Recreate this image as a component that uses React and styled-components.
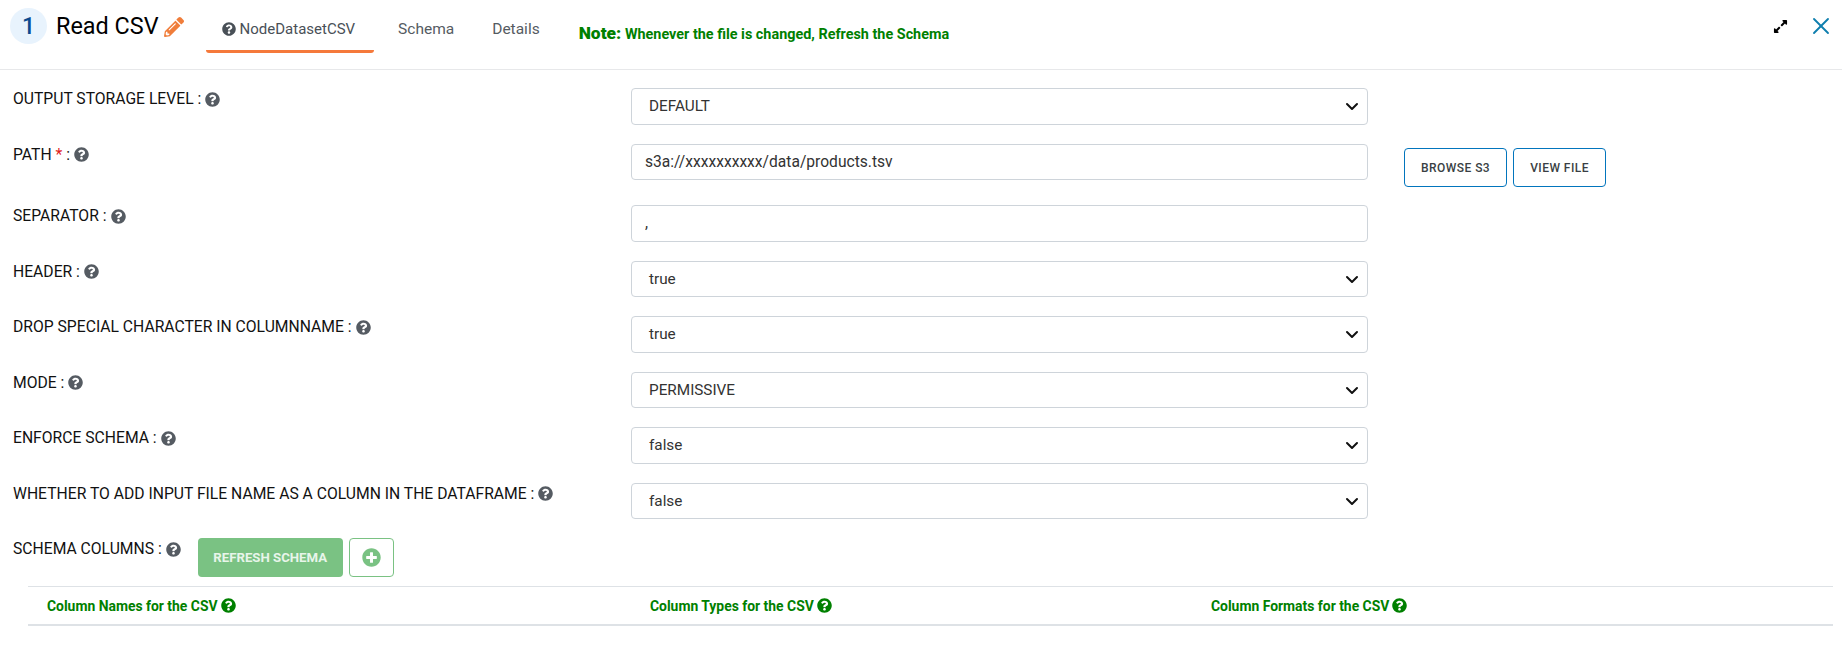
import React from "react";
import styled, { createGlobalStyle } from "styled-components";
import { FaQuestionCircle, FaPencilAlt, FaPlusCircle, FaExpandAlt } from "react-icons/fa";
import { X } from "lucide-react";

const fields = [
  { label: "OUTPUT STORAGE LEVEL :", value: "DEFAULT", type: "select" },
  { label: "PATH", required: true, value: "s3a://xxxxxxxxxx/data/products.tsv", type: "input", actions: true },
  { label: "SEPARATOR :", value: ",", type: "input" },
  { label: "HEADER :", value: "true", type: "select" },
  { label: "DROP SPECIAL CHARACTER IN COLUMNNAME :", value: "true", type: "select" },
  { label: "MODE :", value: "PERMISSIVE", type: "select" },
  { label: "ENFORCE SCHEMA :", value: "false", type: "select" },
  { label: "WHETHER TO ADD INPUT FILE NAME AS A COLUMN IN THE DATAFRAME :", value: "false", type: "select" },
];

const columns = ["Column Names for the CSV", "Column Types for the CSV", "Column Formats for the CSV"];

export default function App() {
  return (
    <Page>
      <GlobalStyle />
      <Header>
        <StepBadge>1</StepBadge>
        <Title>Read CSV</Title>
        <PencilIcon />
        <Tabs>
          <Tab $active>
            <FaQuestionCircle size={14} />
            NodeDatasetCSV
          </Tab>
          <Tab>Schema</Tab>
          <Tab>Details</Tab>
        </Tabs>
        <Note>
          <b>Note:</b> Whenever the file is changed, Refresh the Schema
        </Note>
        <HeaderActions>
          <FaExpandAlt size={15} color="#000" />
          <CloseIcon size={28} strokeWidth={1.6} />
        </HeaderActions>
      </Header>
      <Form>
        {fields.map((f) => (
          <Row key={f.label} $tall={f.actions}>
            <Label>
              {f.label}
              {f.required && (
                <>
                  {" "}
                  <Star>*</Star> :
                </>
              )}
              <HelpIcon />
            </Label>
            <Control>
              {f.type === "select" ? (
                <Select>
                  {f.value}
                  <svg width="16" height="16" viewBox="0 0 16 16" fill="none" stroke="#111" strokeWidth="2" strokeLinecap="round" strokeLinejoin="round">
                    <path d="M3 6l5 5 5-5" />
                  </svg>
                </Select>
              ) : (
                <TextInput readOnly value={f.value} />
              )}
            </Control>
            {f.actions && (
              <Actions>
                <OutlineButton>BROWSE S3</OutlineButton>
                <OutlineButton>VIEW FILE</OutlineButton>
              </Actions>
            )}
          </Row>
        ))}
        <SchemaRow>
          <Label>
            SCHEMA COLUMNS :
            <HelpIcon />
          </Label>
          <RefreshButton>REFRESH SCHEMA</RefreshButton>
          <AddButton>
            <FaPlusCircle size={19} />
          </AddButton>
        </SchemaRow>
        <ColumnsTable>
          {columns.map((c) => (
            <ColumnHead key={c}>
              {c}
              <FaQuestionCircle size={15} />
            </ColumnHead>
          ))}
        </ColumnsTable>
      </Form>
    </Page>
  );
}

const GlobalStyle = createGlobalStyle`
  body {
    margin: 0;
    background: #fff;
    font-family: Roboto, "Liberation Sans", sans-serif;
    color: #212529;
  }
`;

const Page = styled.div`
  width: 1842px;
  height: 669px;
  overflow: hidden;
`;

const Header = styled.header`
  height: 70px;
  box-sizing: border-box;
  border-bottom: 1px solid #e7e8ea;
  display: flex;
  align-items: flex-start;
  padding-left: 10px;
`;

const StepBadge = styled.div`
  width: 37px;
  height: 36px;
  margin-top: 8px;
  border-radius: 50%;
  background: #e8f3fd;
  color: #0b4a8f;
  font-size: 23px;
  font-weight: 500;
  display: flex;
  align-items: center;
  justify-content: center;
`;

const Title = styled.div`
  margin: 11px 0 0 9px;
  font-size: 23.4px;
  line-height: 30px;
  color: #000;
`;

const PencilIcon = styled(FaPencilAlt)`
  width: 20px;
  height: 20px;
  margin: 17px 0 0 5px;
  color: #f07d3a;
`;

const Tabs = styled.nav`
  display: flex;
  margin-left: 22px;
`;

const Tab = styled.div`
  height: 53px;
  box-sizing: border-box;
  padding: 20px ${(p) => (p.$active ? "19px" : "14px")} 0 ${(p) => (p.$active ? "16px" : "24px")};
  font-size: ${(p) => (p.$active ? "15px" : "15.5px")};
  color: ${(p) => (p.$active ? "#495057" : "#555b62")};
  display: flex;
  align-items: flex-start;
  gap: 4px;
  border-bottom: 3px solid ${(p) => (p.$active ? "#f5793b" : "transparent")};
  border-radius: 0 0 3px 3px;
  svg {
    margin-top: 2px;
  }
`;

const Note = styled.div`
  margin: 23px 0 0 25px;
  font-size: 14.4px;
  font-weight: 700;
  color: #008000;
  b {
    font-size: 17.4px;
  }
`;

const HeaderActions = styled.div`
  margin-left: auto;
  margin-right: 7px;
  padding-top: 12px;
  display: flex;
  align-items: center;
  gap: 19px;
`;

const CloseIcon = styled(X)`
  color: #0f7fae;
`;

const Form = styled.main`
  padding: 18px 9px 0 13px;
`;

const Row = styled.div`
  display: flex;
  align-items: flex-start;
  height: ${(p) => (p.$tall ? "61.5px" : "55.5px")};
`;

const Label = styled.div`
  width: 618px;
  flex: none;
  padding-top: 1px;
  font-size: 15.7px;
  line-height: 20px;
  color: #111;
  display: flex;
  align-items: center;
  white-space: pre-wrap;
`;

const Star = styled.span`
  color: #e02020;
`;

const HelpIcon = styled(FaQuestionCircle)`
  width: 15px;
  height: 15px;
  margin-left: 4px;
  color: #555b62;
`;

const Control = styled.div`
  width: 737px;
  flex: none;
`;

const Select = styled.div`
  height: 36.5px;
  box-sizing: border-box;
  padding: 0 7px 0 17px;
  border: 1px solid #ced4da;
  border-radius: 4px;
  font-size: 15.3px;
  color: #333;
  display: flex;
  align-items: center;
  justify-content: space-between;
`;

const TextInput = styled.input`
  display: block;
  width: 100%;
  height: 36.5px;
  box-sizing: border-box;
  padding: 0 13px;
  border: 1px solid #ced4da;
  border-radius: 4px;
  outline: none;
  font: 15.6px Roboto, sans-serif;
  color: #333;
`;

const Actions = styled.div`
  display: flex;
  gap: 6px;
  margin: 4.5px 0 0 36px;
`;

const OutlineButton = styled.button`
  height: 39px;
  padding: 0 16px;
  background: #fff;
  border: 1px solid #0275bd;
  border-radius: 4px;
  font: 500 12px Roboto, sans-serif;
  letter-spacing: 0.45px;
  color: #3a3f44;
`;

const SchemaRow = styled.div`
  display: flex;
  align-items: flex-start;
  height: 48px;
  ${Label} {
    width: auto;
    margin-right: 17px;
  }
`;

const RefreshButton = styled.button`
  width: 145px;
  height: 39px;
  background: #7ac283;
  border: none;
  border-radius: 4px;
  color: #e8f5ea;
  font: 700 13.2px Roboto, sans-serif;
`;

const AddButton = styled.button`
  width: 45px;
  height: 39px;
  margin-left: 6px;
  background: #fff;
  border: 1px solid #7ac283;
  border-radius: 4px;
  color: #7ac283;
  display: flex;
  align-items: center;
  justify-content: center;
`;

const ColumnsTable = styled.div`
  margin-left: 15px;
  height: 40px;
  box-sizing: border-box;
  border-top: 1px solid #dee2e6;
  border-bottom: 2px solid #dee2e6;
  display: grid;
  grid-template-columns: 603px 561px 1fr;
  align-items: center;
  padding-left: 19px;
`;

const ColumnHead = styled.div`
  display: flex;
  align-items: center;
  gap: 3px;
  font-size: 13.9px;
  font-weight: 700;
  color: #008000;
`;
